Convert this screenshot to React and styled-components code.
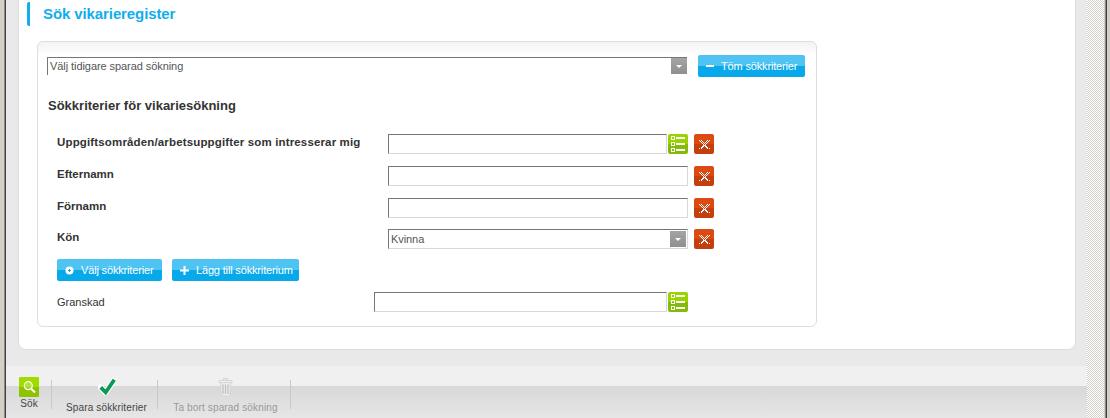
import React from 'react';
import styled, { createGlobalStyle } from 'styled-components';

const GlobalStyle = createGlobalStyle`
  html, body {
    margin: 0;
    padding: 0;
    background: #e9e9e9;
  }
  body {
    font-family: "Liberation Sans", Arial, sans-serif;
    font-size: 11px;
    color: #333;
  }
`;

const Page = styled.div`
  width: 1110px;
  height: 418px;
  display: flex;
  overflow: hidden;
`;

const LeftEdge = styled.div`
  width: 6px;
  flex: none;
  box-sizing: border-box;
  background: #8a8a86;
  border-left: 4px solid #d4d0c8;
  border-right: 1px solid #404040;
`;

const RightEdge = styled.div`
  width: 6px;
  flex: none;
  box-sizing: border-box;
  background: linear-gradient(90deg, #8a8a86 50%, #404040 50%);
  border-left: 1px solid #d4d0c8;
  border-right: 3px solid #d4d0c8;
`;

const Scrollbar = styled.div`
  width: 17px;
  flex: none;
  background-color: #fff;
  background-image: conic-gradient(#d4d0c8 25%, #fff 0 50%, #d4d0c8 0 75%, #fff 0);
  background-size: 2px 2px;
`;

const Main = styled.div`
  flex: 1;
  display: flex;
  flex-direction: column;
  background: #e9e9e9;
`;

const Content = styled.div`
  height: 366px;
  flex: none;
  box-sizing: border-box;
  padding: 0 11px 16px 12px;
  display: flex;
`;

const Panel = styled.div`
  flex: 1;
  background: #fff;
  border: 1px solid #dedede;
  border-top: 0;
  border-radius: 0 0 8px 8px;
  box-sizing: border-box;
  padding: 2px 8px 0;
`;

const Heading = styled.h1`
  margin: 0;
  height: 24px;
  box-sizing: border-box;
  padding-left: 13px;
  border-left: 3px solid #10aeed;
  border-radius: 2px;
  font-size: 15px;
  letter-spacing: -0.1px;
  line-height: 24px;
  font-weight: bold;
  color: #10aeed;
`;

const Card = styled.div`
  width: 780px;
  height: 286px;
  margin: 15px 0 0 10px;
  box-sizing: border-box;
  border: 1px solid #dedede;
  border-radius: 6px;
  background: linear-gradient(#f3f3f3, #fff 14px);
  padding: 13px 9px 0;
`;

const TopRow = styled.div`
  display: flex;
  align-items: flex-start;
  gap: 11px;
`;

const Select = styled.div`
  box-sizing: border-box;
  width: ${p => p.$width}px;
  height: ${p => (p.$bare ? 18 : 20)}px;
  margin-top: ${p => (p.$bare ? 2 : 0)}px;
  flex: none;
  display: flex;
  justify-content: space-between;
  background: #fff;
  border-style: solid;
  border-width: ${p => (p.$bare ? '1px 0 0 1px' : '1px')};
  border-color: #767676 #d8d8d8 #d8d8d8 #767676;
  color: #555;
  font-size: 11px;
  letter-spacing: -0.07px;
  line-height: ${p => (p.$bare ? 17 : 19)}px;
  padding-left: 2px;
`;

const SelectArrow = styled.span`
  width: 16px;
  height: 16px;
  margin: ${p => (p.$bare ? 0 : 1)}px;
  background: linear-gradient(#a4a4a4, #8f8f8f);
  display: flex;
  align-items: center;
  justify-content: center;
  &::after {
    content: '';
    border: 3px solid transparent;
    border-top: 3px solid #fff;
    border-bottom: 0;
  }
`;

const BlueButton = styled.button`
  width: ${p => p.$width}px;
  height: 22px;
  box-sizing: border-box;
  padding: 0 0 0 8px;
  border: 0;
  border-radius: 2px;
  background: linear-gradient(#4fc3f2 0, #4fc3f2 50%, #07a9ea 50%, #07a9ea 100%);
  color: #fff;
  font-family: inherit;
  font-size: 11px;
  letter-spacing: -0.16px;
  white-space: nowrap;
  display: inline-flex;
  align-items: center;
  gap: 7px;
  flex: none;
  cursor: pointer;
  svg { display: block; flex: none; }
`;

const SectionTitle = styled.h2`
  margin: 21px 0 0 1px;
  font-size: 13px;
  line-height: 16px;
  font-weight: bold;
  color: #333;
`;

const Rows = styled.div`
  margin-top: 20px;
`;

const Row = styled.div`
  height: 20px;
  margin-top: ${p => p.$top ?? 12}px;
  display: flex;
  align-items: center;
`;

const Label = styled.label`
  width: 341px;
  flex: none;
  padding-left: 10px;
  box-sizing: border-box;
  font-size: 11.5px;
  letter-spacing: ${p => (p.$wide ? '0.15px' : '0')};
  white-space: nowrap;
  font-weight: bold;
  color: #333;
  position: relative;
  top: -2px;
`;

const TextInput = styled.div`
  box-sizing: border-box;
  width: ${p => p.$width}px;
  height: 20px;
  flex: none;
  background: #fff;
  border-style: solid;
  border-width: 1px;
  border-color: #767676 #d8d8d8 #d8d8d8 #767676;
`;

const IconBox = styled.span`
  width: 20px;
  height: 20px;
  flex: none;
  border-radius: 2px;
  margin-left: ${p => p.$gap}px;
  display: flex;
  align-items: center;
  justify-content: center;
  background: ${p => (p.$kind === 'green'
    ? 'linear-gradient(#97d400 0, #97d400 50%, #84bb0a 50%, #84bb0a 100%)'
    : 'linear-gradient(#dc4a13 0, #dc4a13 50%, #c43f0e 50%, #c43f0e 100%)')};
`;

const ButtonRow = styled.div`
  display: flex;
  gap: 10px;
  margin: 10px 0 0 10px;
`;

const PlainRow = styled.div`
  display: flex;
  align-items: center;
  margin-top: 11px;
  height: 20px;
`;

const PlainLabel = styled.span`
  width: 327px;
  flex: none;
  box-sizing: border-box;
  padding-left: 10px;
  font-size: 11px;
  color: #333;
`;

const Band = styled.div`
  height: 20px;
  flex: none;
  background: #f0f0f0;
`;

const Footer = styled.div`
  flex: 1;
  background: linear-gradient(#d8d8d8, #e6e6e6);
  display: flex;
`;

const Tool = styled.div`
  box-sizing: border-box;
  width: ${p => p.$width}px;
  flex: none;
  height: 41px;
  margin-top: -9px;
  padding-left: ${p => p.$shift || 0}px;
  display: flex;
  flex-direction: column;
  align-items: center;
  font-size: 10px;
  letter-spacing: 0.15px;
  line-height: 12px;
  color: ${p => (p.$disabled ? '#999' : '#444')};
  position: relative;
  &::after {
    content: '';
    position: absolute;
    right: 0;
    top: 3px;
    height: 29px;
    width: 1px;
    background: #c8c8c8;
  }
`;

const ToolIcon = styled.span`
  display: flex;
  align-items: center;
  justify-content: center;
  height: 20px;
  margin-bottom: ${p => p.$gap}px;
`;

const SearchBox = styled.span`
  width: 20px;
  height: 20px;
  border-radius: 1px;
  background: linear-gradient(#a0dc00 0, #a0dc00 50%, #8cc400 50%, #8cc400 100%);
  display: flex;
`;

const Clear = ({ gap = 6 }) => (
  <IconBox $kind="red" $gap={gap}>
    <svg width="11" height="11" viewBox="0 0 10 10" fill="none" stroke="#fff" strokeWidth="0.9" shapeRendering="crispEdges">
      <path d="M0.5 1.5l1-1L5 4l3.5-3.5 1 1L6 5l3.5 3.5-1 1L5 6 1.5 9.5l-1-1L4 5z" />
    </svg>
  </IconBox>
);

const ListPick = () => (
  <IconBox $kind="green" $gap={1}>
    <svg width="14" height="16" viewBox="0 0 14 16" fill="none" stroke="#fff">
      <rect x="0.5" y="0.5" width="3" height="3" />
      <rect x="0.5" y="6.5" width="3" height="3" />
      <rect x="0.5" y="12.5" width="3" height="3" />
      <path strokeWidth="2" d="M5 2h9M5 8h9M5 14h9" />
    </svg>
  </IconBox>
);

const App = () => (
  <Page>
    <GlobalStyle />
    <LeftEdge />
    <Main>
      <Content>
        <Panel>
          <Heading>Sök vikarieregister</Heading>
          <Card>
            <TopRow>
              <Select $width={640} $bare>
                Välj tidigare sparad sökning
                <SelectArrow $bare />
              </Select>
              <BlueButton $width={107}>
                <svg width="8" height="8" viewBox="0 0 8 8"><path d="M0 3h8v2H0z" fill="#fff" /></svg>
                Töm sökkriterier
              </BlueButton>
            </TopRow>
            <SectionTitle>Sökkriterier för vikariesökning</SectionTitle>
            <Rows>
              <Row $top={0}>
                <Label $wide>Uppgiftsområden/arbetsuppgifter som intresserar mig</Label>
                <TextInput $width={279} />
                <ListPick />
                <Clear />
              </Row>
              <Row>
                <Label>Efternamn</Label>
                <TextInput $width={300} />
                <Clear />
              </Row>
              <Row>
                <Label>Förnamn</Label>
                <TextInput $width={300} />
                <Clear />
              </Row>
              <Row $top={11}>
                <Label>Kön</Label>
                <Select $width={300}>
                  Kvinna
                  <SelectArrow />
                </Select>
                <Clear />
              </Row>
            </Rows>
            <ButtonRow>
              <BlueButton $width={105}>
                <svg width="9" height="9" viewBox="0 0 9 9">
                  <circle cx="4.5" cy="4.5" r="4" fill="#fff" />
                  <path d="M3 4.5h3M4.5 3v3" stroke="#07a9ea" />
                </svg>
                Välj sökkriterier
              </BlueButton>
              <BlueButton $width={127}>
                <svg width="9" height="9" viewBox="0 0 9 9"><path d="M3.5 0h2v3.5H9v2H5.5V9h-2V5.5H0v-2h3.5z" fill="#fff" /></svg>
                Lägg till sökkriterium
              </BlueButton>
            </ButtonRow>
            <PlainRow>
              <PlainLabel>Granskad</PlainLabel>
              <TextInput $width={293} />
              <ListPick />
            </PlainRow>
          </Card>
        </Panel>
      </Content>
      <Band />
      <Footer>
        <Tool $width={46}>
          <ToolIcon $gap={1}>
            <SearchBox>
              <svg width="20" height="20" viewBox="0 0 20 20" fill="none" stroke="#fff">
                <circle cx="9.3" cy="8.7" r="4" fill="#ffffff33" strokeWidth="1.2" />
                <path strokeWidth="2" d="M12.5 12l3.5 3.5" />
              </svg>
            </SearchBox>
          </ToolIcon>
          Sök
        </Tool>
        <Tool $width={106} $shift={3}>
          <ToolIcon $gap={5}>
            <svg width="18" height="18" viewBox="0 0 18 18" fill="none" strokeLinecap="round" strokeLinejoin="round">
              <path d="M2.7 9.3l5 5L16.3 1.7" stroke="#fff" strokeWidth="6" />
              <path d="M2.7 9.3l5 5L16.3 1.7" stroke="#0a9a55" strokeWidth="3.8" strokeLinecap="butt" strokeLinejoin="miter" />
            </svg>
          </ToolIcon>
          Spara sökkriterier
        </Tool>
        <Tool $width={133} $shift={2} $disabled>
          <ToolIcon $gap={5}>
            <svg width="15" height="20" viewBox="0 0 15 20">
              <path d="M5.5 1.5h4v2h-4z" fill="#efefef" stroke="#d0d0d0" />
              <path d="M1 3.5h13v2H1z" fill="#f2f2f2" stroke="#d4d4d4" />
              <path d="M2.5 5.5h10l-.7 13.5H3.2z" fill="#ededed" stroke="#d4d4d4" />
              <path d="M5 7.5v9.5M7.5 7.5v9.5M10 7.5v9.5" stroke="#bcbcbc" strokeWidth="1.2" />
            </svg>
          </ToolIcon>
          Ta bort sparad sökning
        </Tool>
      </Footer>
    </Main>
    <Scrollbar />
    <RightEdge />
  </Page>
);

export default App;
